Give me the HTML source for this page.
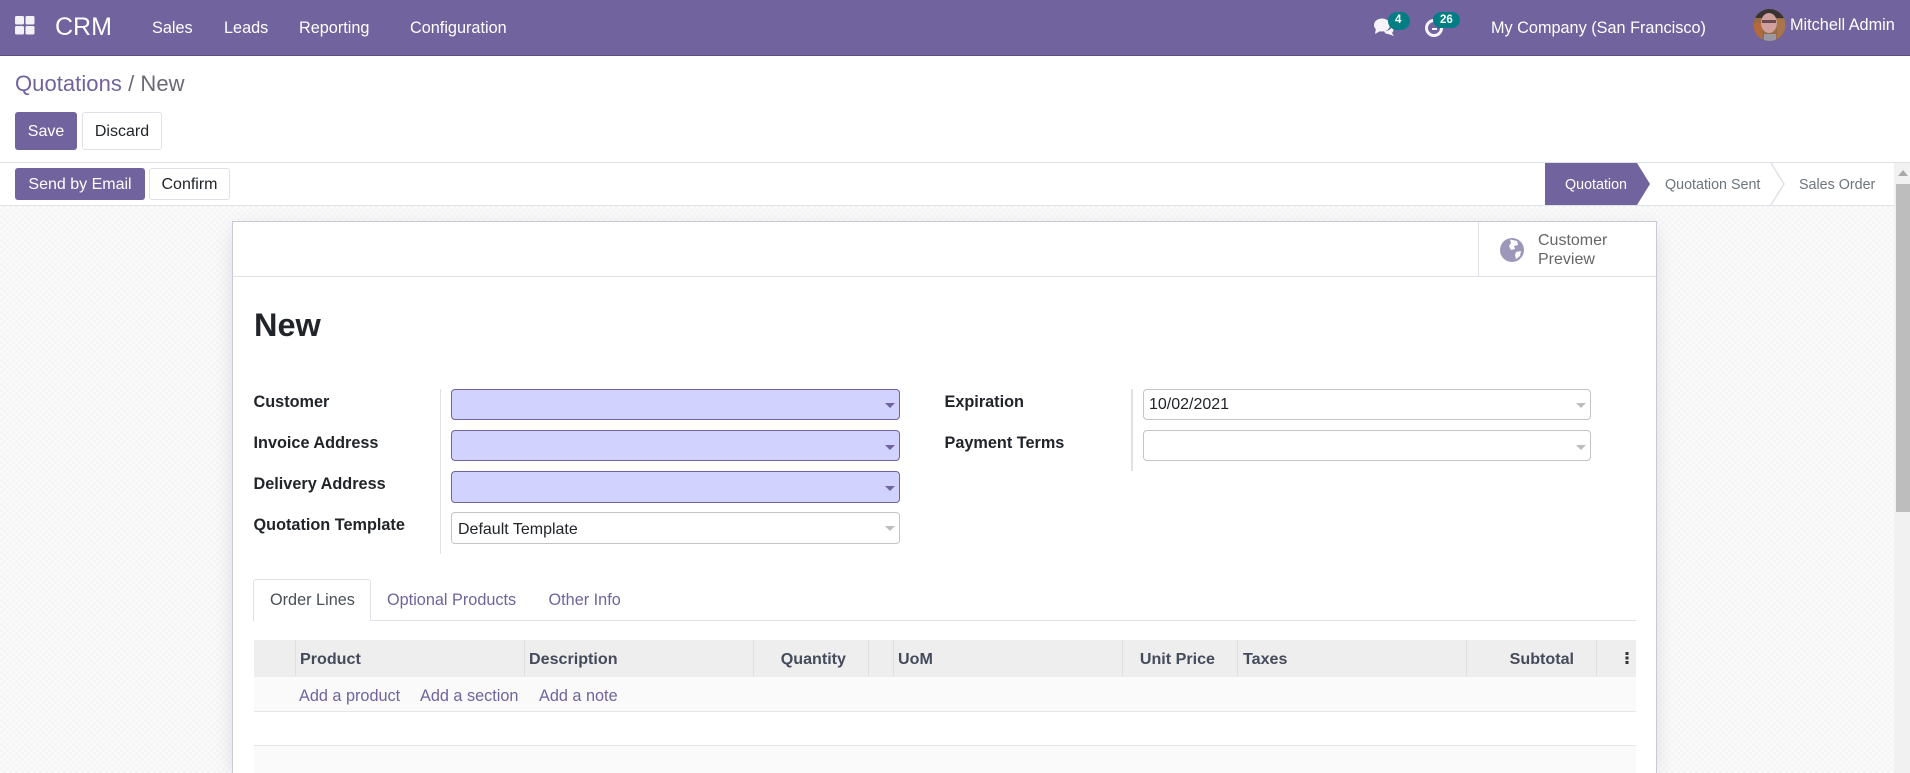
<!DOCTYPE html>
<html>
<head>
<meta charset="utf-8">
<style>
html,body{margin:0;padding:0;width:1910px;height:773px;overflow:hidden;background:#fff;font-family:"Liberation Sans",sans-serif;}
.a{position:absolute;white-space:nowrap;line-height:1;}
.box{position:absolute;box-sizing:border-box;}
.nav{color:#fff;font-size:16.25px;}
.btn{position:absolute;box-sizing:border-box;border-radius:3px;font-size:16px;text-align:center;}
.p{background:#71639e;color:#fff;}
.w{background:#fff;color:#212529;border:1px solid #dee2e6;}
.lab{font-weight:bold;font-size:16.25px;color:#212529;}
.inp{position:absolute;box-sizing:border-box;border-radius:4px;border:1px solid #c4c4c4;background:#fff;}
.req{background:#d2d2ff;border-color:#71639e;}
.car{position:absolute;width:0;height:0;border-left:5px solid transparent;border-right:5px solid transparent;border-top:5px solid #bdbdbd;}
.req .car{border-top-color:#71639e;}
.th{font-weight:bold;font-size:16.1px;color:#444b5a;top:651px;}
.sep{position:absolute;top:640px;height:36px;width:1px;background:#dedede;}
.link{color:#71639e;font-size:16.25px;top:688px;}
</style>
</head>
<body>
<!-- navbar -->
<div class="box" style="left:0;top:0;width:1910px;height:56px;background:#71639e;border-bottom:1px solid #5b4f7f;"></div>
<svg class="box" style="left:15px;top:16px" width="20" height="19" viewBox="0 0 20 19"><g fill="#f3f1f6"><rect x="0" y="0" width="9" height="8.5" rx="1.5"/><rect x="10.5" y="0" width="9" height="8.5" rx="1.5"/><rect x="0" y="10" width="9" height="8.5" rx="1.5"/><rect x="10.5" y="10" width="9" height="8.5" rx="1.5"/></g></svg>
<div class="a" style="left:55px;top:15px;font-size:25px;color:#fff;">CRM</div>
<div class="a nav" style="left:152px;top:20px;">Sales</div>
<div class="a nav" style="left:224px;top:20px;">Leads</div>
<div class="a nav" style="left:299px;top:20px;">Reporting</div>
<div class="a nav" style="left:410px;top:20px;">Configuration</div>

<svg class="box" style="left:1373px;top:17px" width="24" height="20" viewBox="0 0 24 20"><g fill="#f6f4f8"><ellipse cx="9" cy="8" rx="8" ry="6.5"/><path d="M3 11 L2 17 L9 13Z"/><path d="M11 14 Q17 14 19 10 Q22 13 19 16 L21 19 L15 17 Q12 17 11 14Z"/></g></svg>
<div class="box" style="left:1388px;top:12px;width:22px;height:18px;border-radius:9px;background:#017e84;"></div>
<div class="a" style="left:1395px;top:15px;font-size:11.5px;font-weight:bold;color:#fff;">4</div>
<svg class="box" style="left:1424px;top:17px" width="22" height="22" viewBox="0 0 22 22"><circle cx="10" cy="11" r="7.5" fill="none" stroke="#f6f4f8" stroke-width="3"/><path d="M8 12h5" stroke="#f6f4f8" stroke-width="2"/></svg>
<div class="box" style="left:1433px;top:12px;width:27px;height:16px;border-radius:8px;background:#017e84;"></div>
<div class="a" style="left:1440px;top:14.5px;font-size:11.5px;font-weight:bold;color:#fff;">26</div>
<div class="a nav" style="left:1491px;top:20px;">My Company (San Francisco)</div>
<svg class="box" style="left:1753px;top:9px" width="33" height="32" viewBox="0 0 33 32"><defs><clipPath id="av"><ellipse cx="16.5" cy="16" rx="16" ry="16"/></clipPath></defs><g clip-path="url(#av)"><rect width="33" height="32" fill="#9a6a45"/><rect x="0" y="0" width="33" height="9" fill="#3a3331"/><rect x="0" y="14" width="9" height="18" fill="#b4683c"/><ellipse cx="16" cy="14" rx="8" ry="10" fill="#cfa09c"/><rect x="9" y="11" width="14" height="3" fill="#6a4a50"/><rect x="11" y="25" width="12" height="7" fill="#9a98a2"/><rect x="24" y="10" width="9" height="22" fill="#a9744a"/></g></svg>
<div class="a nav" style="left:1790px;top:17px;">Mitchell Admin</div>

<!-- control panel -->
<div class="a" style="left:15px;top:73px;font-size:22px;color:#71639e;letter-spacing:.05px;">Quotations<span style="color:#6b6b75;"> / New</span></div>
<div class="btn p" style="left:15px;top:112px;width:62px;height:38px;line-height:40px;">Save</div>
<div class="btn w" style="left:82px;top:112px;width:80px;height:38px;line-height:38px;">Discard</div>
<div class="box" style="left:0;top:162px;width:1910px;height:1px;background:#dee2e6;"></div>

<!-- background -->
<div class="box" style="left:0;top:206px;width:1895px;height:567px;background-color:#fafafa;background-image:linear-gradient(45deg,#f5f5f5 25%,transparent 25%,transparent 75%,#f5f5f5 75%),linear-gradient(45deg,#f5f5f5 25%,transparent 25%,transparent 75%,#f5f5f5 75%);background-size:6px 6px;background-position:0 0,3px 3px;"></div>
<!-- statusbar -->
<div class="box" style="left:0;top:163px;width:1895px;height:43px;background:#fff;border-bottom:1px solid #dee2e6;"></div>
<div class="btn p" style="left:15px;top:168px;width:130px;height:32px;line-height:34px;">Send by Email</div>
<div class="btn w" style="left:149px;top:168px;width:81px;height:32px;line-height:32px;">Confirm</div>
<svg class="box" style="left:1545px;top:163px" width="260" height="42" viewBox="0 0 260 42"><path d="M0 0H92L105 21L92 42H0Z" fill="#71639e"/><path d="M226 0L239 21L226 42" fill="none" stroke="#dee2e6" stroke-width="1.5"/></svg>
<div class="a" style="left:1565px;top:178px;font-size:14.3px;color:#fff;">Quotation</div>
<div class="a" style="left:1665px;top:178px;font-size:14.3px;color:#6c757d;">Quotation Sent</div>
<div class="a" style="left:1799px;top:178px;font-size:14.3px;color:#6c757d;">Sales Order</div>

<!-- scrollbar -->
<div class="box" style="left:1894px;top:163px;width:16px;height:610px;background:#f1f1f1;"></div>
<div class="box" style="left:1896px;top:184px;width:14px;height:328px;background:#bdbdbd;"></div>
<svg class="box" style="left:1896px;top:168px" width="14" height="10" viewBox="0 0 14 10"><path d="M2 8L7 2L12 8Z" fill="#a8a8a8"/></svg>

<!-- sheet -->
<div class="box" style="left:232px;top:221px;width:1425px;height:552px;background:#fff;border:1px solid #c9c9d6;border-bottom:0;box-shadow:0 5px 20px -5px rgba(0,0,0,.18);"></div>
<div class="box" style="left:233px;top:276px;width:1423px;height:1px;background:#dee2e6;"></div>
<div class="box" style="left:1478px;top:222px;width:1px;height:54px;background:#dee2e6;"></div>
<svg class="box" style="left:1500px;top:238px" width="24" height="24" viewBox="0 0 24 24"><circle cx="12" cy="12" r="12" fill="#9d98b9"/><path d="M10 1.5 L17 3 L18 7 L14 8 L15 11 L11 12 L9 8 L11 5Z M16 14 L21 13 L20 18 L16 21 L15 17Z" fill="#fff"/></svg>
<div class="a" style="left:1538px;top:233px;font-size:16px;color:#666;">Customer</div>
<div class="a" style="left:1538px;top:252px;font-size:16px;color:#666;">Preview</div>

<div class="a" style="left:254px;top:309px;font-size:32.5px;font-weight:bold;color:#212529;">New</div>

<!-- left group -->
<div class="a lab" style="left:253.5px;top:394px;">Customer</div>
<div class="a lab" style="left:253.5px;top:435px;">Invoice Address</div>
<div class="a lab" style="left:253.5px;top:476px;">Delivery Address</div>
<div class="a lab" style="left:253.5px;top:517px;">Quotation Template</div>
<div class="box" style="left:440px;top:389px;width:1px;height:165px;background:#dee2e6;"></div>
<div class="inp req" style="left:451px;top:389px;width:449px;height:31px;"><div class="car" style="left:433px;top:13px;"></div></div>
<div class="inp req" style="left:451px;top:430px;width:449px;height:31px;"><div class="car" style="left:433px;top:14px;"></div></div>
<div class="inp req" style="left:451px;top:471px;width:449px;height:32px;"><div class="car" style="left:433px;top:14px;"></div></div>
<div class="inp" style="left:451px;top:512px;width:449px;height:32px;"><div class="car" style="left:433px;top:13px;"></div></div>
<div class="a" style="left:458px;top:522px;font-size:16px;color:#212529;">Default Template</div>

<!-- right group -->
<div class="a lab" style="left:944.5px;top:394px;">Expiration</div>
<div class="a lab" style="left:944.5px;top:435px;">Payment Terms</div>
<div class="box" style="left:1131px;top:389px;width:2px;height:82px;background:#dee2e6;"></div>
<div class="inp" style="left:1143px;top:389px;width:448px;height:31px;"><div class="car" style="left:432px;top:13px;"></div></div>
<div class="inp" style="left:1143px;top:430px;width:448px;height:31px;"><div class="car" style="left:432px;top:14px;"></div></div>
<div class="a" style="left:1149px;top:397px;font-size:16px;color:#212529;">10/02/2021</div>

<!-- tabs -->
<div class="box" style="left:254px;top:620px;width:1382px;height:1px;background:#dee2e6;"></div>
<div class="box" style="left:253px;top:579px;width:118px;height:42px;background:#fff;border:1px solid #dee2e6;border-bottom:0;border-radius:3px 3px 0 0;"></div>
<div class="a" style="left:270px;top:592px;font-size:16.25px;color:#495057;">Order Lines</div>
<div class="a" style="left:387px;top:592px;font-size:16.25px;color:#71639e;">Optional Products</div>
<div class="a" style="left:548.5px;top:592px;font-size:16.25px;color:#71639e;">Other Info</div>

<!-- table -->
<div class="box" style="left:254px;top:640px;width:1382px;height:37px;background:#eeeeee;"></div>
<div class="sep" style="left:295px"></div>
<div class="sep" style="left:524px"></div>
<div class="sep" style="left:753px"></div>
<div class="sep" style="left:868px"></div>
<div class="sep" style="left:893px"></div>
<div class="sep" style="left:1122px"></div>
<div class="sep" style="left:1237px"></div>
<div class="sep" style="left:1466px"></div>
<div class="sep" style="left:1596px"></div>
<div class="a th" style="left:300px;">Product</div>
<div class="a th" style="left:529px;">Description</div>
<div class="a th" style="right:1064px;">Quantity</div>
<div class="a th" style="left:898px;">UoM</div>
<div class="a th" style="right:695px;">Unit Price</div>
<div class="a th" style="left:1243px;">Taxes</div>
<div class="a th" style="right:336px;">Subtotal</div>
<svg class="box" style="left:1625px;top:651px" width="4" height="14" viewBox="0 0 4 14"><g fill="#333"><rect x="0.5" y="1" width="3" height="3"/><rect x="0.5" y="5.5" width="3" height="3"/><rect x="0.5" y="10" width="3" height="3"/></g></svg>
<div class="box" style="left:254px;top:677px;width:1382px;height:35px;background:#fafafa;border-bottom:1px solid #e6e6e6;"></div>
<div class="a link" style="left:299px;">Add a product</div>
<div class="a link" style="left:420px;">Add a section</div>
<div class="a link" style="left:539px;">Add a note</div>
<div class="box" style="left:254px;top:745px;width:1382px;height:28px;background:#fafafa;border-top:1px solid #e6e6e6;"></div>
</body>
</html>
